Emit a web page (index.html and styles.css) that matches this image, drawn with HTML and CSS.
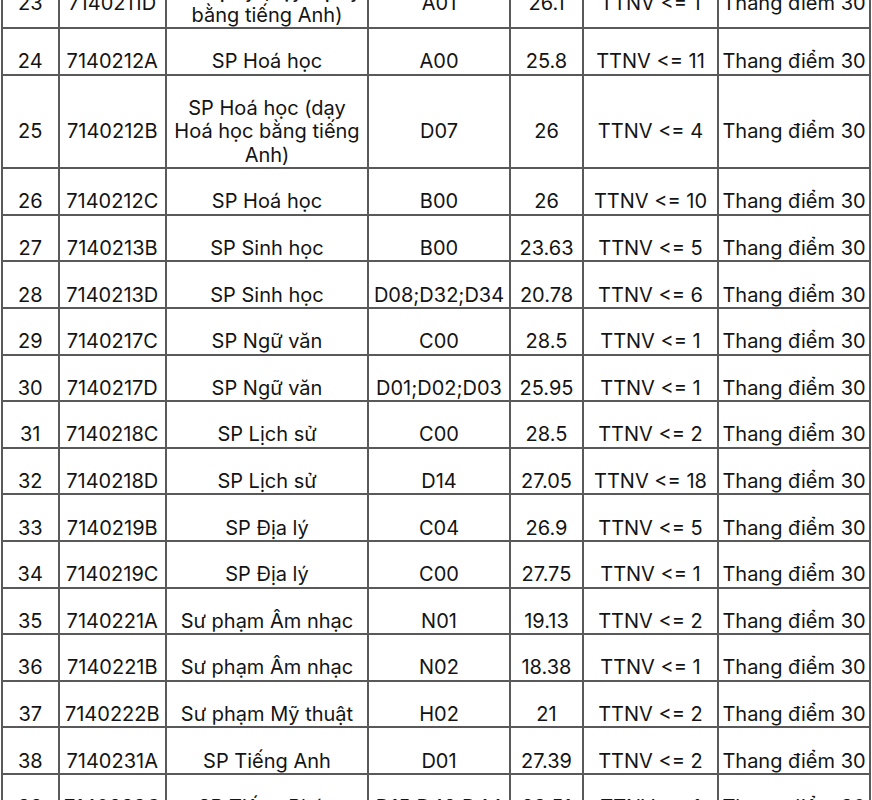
FILE: index.html
```html
<!DOCTYPE html>
<html lang="vi">
<head>
<meta charset="utf-8">
<title>Điểm chuẩn</title>
<link rel="stylesheet" href="styles.css">
</head>
<body>
<table class="scores">
<colgroup>
<col class="c-stt"><col class="c-code"><col class="c-name"><col class="c-group"><col class="c-score"><col class="c-rule"><col class="c-scale">
</colgroup>
<tbody>
<tr><td>23</td><td>7140211D</td><td>SP Vật lý (dạy Vật lý bằng tiếng Anh)</td><td>A01</td><td>26.1</td><td>TTNV &lt;= 1</td><td>Thang điểm 30</td></tr>
<tr><td>24</td><td>7140212A</td><td>SP Hoá học</td><td>A00</td><td>25.8</td><td>TTNV &lt;= 11</td><td>Thang điểm 30</td></tr>
<tr><td>25</td><td>7140212B</td><td>SP Hoá học (dạy Hoá học bằng tiếng Anh)</td><td>D07</td><td>26</td><td>TTNV &lt;= 4</td><td>Thang điểm 30</td></tr>
<tr><td>26</td><td>7140212C</td><td>SP Hoá học</td><td>B00</td><td>26</td><td>TTNV &lt;= 10</td><td>Thang điểm 30</td></tr>
<tr><td>27</td><td>7140213B</td><td>SP Sinh học</td><td>B00</td><td>23.63</td><td>TTNV &lt;= 5</td><td>Thang điểm 30</td></tr>
<tr><td>28</td><td>7140213D</td><td>SP Sinh học</td><td>D08;D32;D34</td><td>20.78</td><td>TTNV &lt;= 6</td><td>Thang điểm 30</td></tr>
<tr><td>29</td><td>7140217C</td><td>SP Ngữ văn</td><td>C00</td><td>28.5</td><td>TTNV &lt;= 1</td><td>Thang điểm 30</td></tr>
<tr><td>30</td><td>7140217D</td><td>SP Ngữ văn</td><td>D01;D02;D03</td><td>25.95</td><td>TTNV &lt;= 1</td><td>Thang điểm 30</td></tr>
<tr><td>31</td><td>7140218C</td><td>SP Lịch sử</td><td>C00</td><td>28.5</td><td>TTNV &lt;= 2</td><td>Thang điểm 30</td></tr>
<tr><td>32</td><td>7140218D</td><td>SP Lịch sử</td><td>D14</td><td>27.05</td><td>TTNV &lt;= 18</td><td>Thang điểm 30</td></tr>
<tr><td>33</td><td>7140219B</td><td>SP Địa lý</td><td>C04</td><td>26.9</td><td>TTNV &lt;= 5</td><td>Thang điểm 30</td></tr>
<tr><td>34</td><td>7140219C</td><td>SP Địa lý</td><td>C00</td><td>27.75</td><td>TTNV &lt;= 1</td><td>Thang điểm 30</td></tr>
<tr><td>35</td><td>7140221A</td><td>Sư phạm Âm nhạc</td><td>N01</td><td>19.13</td><td>TTNV &lt;= 2</td><td>Thang điểm 30</td></tr>
<tr><td>36</td><td>7140221B</td><td>Sư phạm Âm nhạc</td><td>N02</td><td>18.38</td><td>TTNV &lt;= 1</td><td>Thang điểm 30</td></tr>
<tr><td>37</td><td>7140222B</td><td>Sư phạm Mỹ thuật</td><td>H02</td><td>21</td><td>TTNV &lt;= 2</td><td>Thang điểm 30</td></tr>
<tr><td>38</td><td>7140231A</td><td>SP Tiếng Anh</td><td>D01</td><td>27.39</td><td>TTNV &lt;= 2</td><td>Thang điểm 30</td></tr>
<tr><td>39</td><td>7140233C</td><td>SP Tiếng Pháp</td><td>D15;D42;D44</td><td>23.51</td><td>TTNV &lt;= 1</td><td>Thang điểm 30</td></tr>
</tbody>
</table>
</body>
</html>
```
FILE: styles.css
```css
html, body {
  margin: 0;
  padding: 0;
  background: #ffffff;
}
body {
  font-family: Inter, "Noto Sans", "DejaVu Sans", sans-serif;
  font-size: 20px;
  color: #141414;
}
.scores {
  table-layout: fixed;
  border-collapse: separate;
  border-spacing: 0;
  width: 870px;
  margin: -41px 0 0 1px;
  border-left: 2px solid #595959;
}
.c-stt { width: 56.5px; }
.c-code { width: 107.5px; }
.c-name { width: 202px; }
.c-group { width: 142px; }
.c-score { width: 73px; }
.c-rule { width: 135px; }
.c-scale { width: 152px; }
.scores td {
  box-sizing: border-box;
  border-right: 2px solid #595959;
  border-bottom: 2px solid #595959;
  padding: 21.1px 2px 0;
  line-height: 23.5px;
  text-align: center;
  vertical-align: middle;
  white-space: normal;
}
```
